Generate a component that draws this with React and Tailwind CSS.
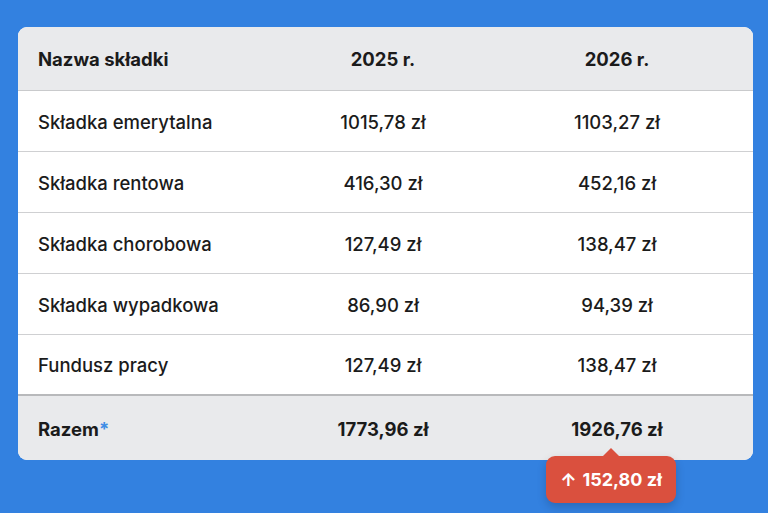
import React from "react";

const rows = [
  ["Składka emerytalna", "1015,78 zł", "1103,27 zł"],
  ["Składka rentowa", "416,30 zł", "452,16 zł"],
  ["Składka chorobowa", "127,49 zł", "138,47 zł"],
  ["Składka wypadkowa", "86,90 zł", "94,39 zł"],
  ["Fundusz pracy", "127,49 zł", "138,47 zł"],
];

export default function App() {
  return (
    <div
      className="w-[768px] h-[513px] bg-[#3381e0] pt-[27px] pl-[18px] overflow-hidden"
      style={{ fontFamily: "Inter, 'Noto Sans', sans-serif" }}
    >
      <div className="relative w-[735px] rounded-[9px] bg-white text-[#1b1b1b]">
        <div className="grid grid-cols-[248px_234px_234px] h-[64px] items-center pt-[3px] bg-[#e9eaec] rounded-t-[9px] border-b border-[#c9cacc] text-[18.5px] font-bold">
          <div className="pl-5">Nazwa składki</div>
          <div className="text-center">2025 r.</div>
          <div className="text-center">2026 r.</div>
        </div>
        {rows.map((r, i) => (
          <div
            key={i}
            className={`grid grid-cols-[248px_234px_234px] h-[61px] items-center pt-[3px] text-[18.5px] font-medium ${
              i < rows.length - 1 ? "border-b border-[#cfd0d2]" : "border-b-2 border-[#b8b9bb]"
            }`}
          >
            <div className="pl-5">{r[0]}</div>
            <div className="text-center">{r[1]}</div>
            <div className="text-center">{r[2]}</div>
          </div>
        ))}
        <div className="grid grid-cols-[248px_234px_234px] h-[64px] items-center pt-[3px] bg-[#e9eaec] rounded-b-[9px] text-[18.5px] font-bold">
          <div className="pl-5">
            Razem<span className="text-[#3f8de5]">*</span>
          </div>
          <div className="text-center">1773,96 zł</div>
          <div className="text-center">1926,76 zł</div>
        </div>
        <div className="absolute left-[528px] top-[429px] w-[130px] h-[47px] rounded-[9px] bg-[#da503e] shadow-[0_4px_10px_rgba(0,0,0,0.18)] flex items-center justify-center text-white text-[18px] font-bold">
          <div className="absolute left-[56px] top-[-8px] w-0 h-0 border-l-[9px] border-r-[9px] border-b-[9px] border-l-transparent border-r-transparent border-b-[#da503e]" />
          <span className="mr-1.5">↑</span>152,80 zł
        </div>
      </div>
    </div>
  );
}
